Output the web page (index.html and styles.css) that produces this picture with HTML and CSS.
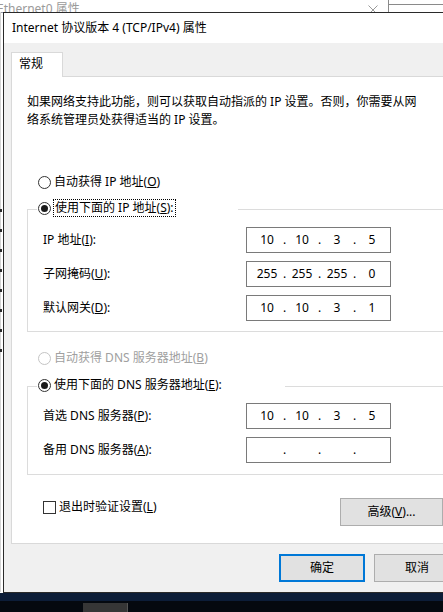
FILE: index.html
```html
<!DOCTYPE html>
<html lang="zh-CN">
<head>
<meta charset="utf-8">
<title>Internet 协议版本 4 (TCP/IPv4) 属性</title>
<link rel="stylesheet" href="styles.css">
</head>
<body>
<div class="screen">
  <div class="bg-window">
    <div class="bg-title">Ethernet0 属性</div>
    <svg class="bg-chrome" width="443" height="14" viewBox="0 0 443 14">
      <path d="M368.5 5.5 L377.5 14.5 M377.5 5.5 L368.5 14.5" stroke="#9a9a9a" stroke-width="1" fill="none"/>
      <path d="M388.5 0 V14 M388.5 4.5 H443" stroke="#8a8a8a" stroke-width="1" fill="none"/>
    </svg>
    <span class="bg-strip"></span>
    <span class="bg-strip-marks"></span>
  </div>
  <div class="taskbar"><span class="task-item"></span></div>

  <div class="dialog">
    <div class="titlebar">Internet 协议版本 4 (TCP/IPv4) 属性</div>
    <div class="body">
      <div class="tabs"><div class="tab">常规</div></div>
      <div class="panel">
        <p class="desc">如果网络支持此功能，则可以获取自动指派的 IP 设置。否则，你需要从网<br>络系统管理员处获得适当的 IP 设置。</p>

        <div class="option option-ip-auto"><span class="radio"></span><span class="opt-label">自动获得 IP 地址(<u>O</u>)</span></div>

        <div class="group group-ip">
          <div class="legend legend-ip"><span class="radio checked"></span><span class="opt-label focus">使用下面的 IP 地址(<u>S</u>):</span></div>
          <div class="field">
            <span class="field-label">IP 地址(<u>I</u>):</span>
            <div class="ipbox"><span class="seg">10</span><span class="dot">.</span><span class="seg">10</span><span class="dot">.</span><span class="seg">3</span><span class="dot">.</span><span class="seg">5</span></div>
          </div>
          <div class="field">
            <span class="field-label">子网掩码(<u>U</u>):</span>
            <div class="ipbox"><span class="seg">255</span><span class="dot">.</span><span class="seg">255</span><span class="dot">.</span><span class="seg">255</span><span class="dot">.</span><span class="seg">0</span></div>
          </div>
          <div class="field">
            <span class="field-label">默认网关(<u>D</u>):</span>
            <div class="ipbox"><span class="seg">10</span><span class="dot">.</span><span class="seg">10</span><span class="dot">.</span><span class="seg">3</span><span class="dot">.</span><span class="seg">1</span></div>
          </div>
        </div>

        <div class="option option-dns-auto disabled"><span class="radio"></span><span class="opt-label">自动获得 DNS 服务器地址(<u>B</u>)</span></div>

        <div class="group group-dns">
          <div class="legend legend-dns"><span class="radio checked"></span><span class="opt-label">使用下面的 DNS 服务器地址(<u>E</u>):</span></div>
          <div class="field">
            <span class="field-label">首选 DNS 服务器(<u>P</u>):</span>
            <div class="ipbox"><span class="seg">10</span><span class="dot">.</span><span class="seg">10</span><span class="dot">.</span><span class="seg">3</span><span class="dot">.</span><span class="seg">5</span></div>
          </div>
          <div class="field">
            <span class="field-label">备用 DNS 服务器(<u>A</u>):</span>
            <div class="ipbox"><span class="seg"></span><span class="dot">.</span><span class="seg"></span><span class="dot">.</span><span class="seg"></span><span class="dot">.</span><span class="seg"></span></div>
          </div>
        </div>

        <div class="footer-row">
          <div class="check-row"><span class="checkbox"></span><span class="opt-label">退出时验证设置(<u>L</u>)</span></div>
          <button class="btn btn-advanced" type="button">高级(<u>V</u>)...</button>
        </div>
      </div>
      <div class="actions">
        <button class="btn btn-dialog btn-default" type="button">确定</button>
        <button class="btn btn-dialog" type="button">取消</button>
      </div>
    </div>
  </div>
</div>
</body>
</html>
```

FILE: styles.css
```css
* { box-sizing: border-box; }

html, body {
  margin: 0;
  padding: 0;
}

body {
  font-family: "Noto Sans", "Noto Sans CJK SC", sans-serif;
  font-size: 12px;
  line-height: 18px;
  color: #000;
  background: #fff;
}

.screen {
  position: relative;
  width: 443px;
  height: 612px;
  overflow: hidden;
  display: flex;
  flex-direction: column;
}

/* background window peeking out */
.bg-window {
  position: relative;
  height: 593px;
  background: #fff;
}

.bg-title {
  position: absolute;
  left: -3px;
  top: 0;
  line-height: 18px;
  color: #9a9a9a;
  white-space: nowrap;
}

.bg-chrome {
  position: absolute;
  left: 0;
  top: 0;
  display: block;
}

.bg-strip {
  position: absolute;
  left: 0;
  top: 12px;
  width: 3px;
  height: 580px;
  border-left: 1px solid #d4d4d4;
}

.bg-strip-marks {
  position: absolute;
  left: 0;
  top: 206px;
  width: 2px;
  height: 160px;
  background: repeating-linear-gradient(to bottom, transparent 0 3px, #2a2a2a 3px 6px, transparent 6px 20px);
}

.taskbar {
  position: relative;
  height: 19px;
  background: linear-gradient(to bottom, #0c1d38 0 8px, #05090f 8px);
}

.task-item {
  position: absolute;
  left: 83px;
  top: 10px;
  width: 45px;
  height: 9px;
  background: #363636;
  border-right: 1px solid #555;
}

/* dialog */
.dialog {
  position: absolute;
  left: 3px;
  top: 12px;
  width: 470px;
  border: 1px solid #2a2a2a;
  background: #f0f0f0;
  display: flex;
  flex-direction: column;
}

.titlebar {
  height: 30px;
  line-height: 30px;
  padding-left: 8px;
  background: #fff;
  white-space: nowrap;
}

.body {
  padding: 9px 7px 10px 7px;
  display: flex;
  flex-direction: column;
}

.tabs {
  display: flex;
  height: 24px;
}

.tab {
  position: relative;
  z-index: 1;
  width: 52px;
  height: 25px;
  padding-left: 7px;
  line-height: 22px;
  background: #fff;
  border: 1px solid #d9d9d9;
  border-bottom: none;
}

.panel {
  background: #fff;
  border: 1px solid #d9d9d9;
  padding: 16px 0 17px 0;
  display: flex;
  flex-direction: column;
}

.desc {
  margin: 0 0 0 15px;
  line-height: 18px;
  white-space: nowrap;
}

.option {
  display: flex;
  align-items: center;
  height: 18px;
  padding-left: 26px;
  gap: 3px;
}

.option-ip-auto { margin-top: 44px; }
.option-dns-auto { margin-top: 17px; }

.opt-label {
  white-space: nowrap;
  line-height: 16px;
}

.disabled .opt-label { color: #a0a0a0; }

.radio {
  flex: none;
  width: 13px;
  height: 13px;
  border: 1px solid #333;
  border-radius: 50%;
  background: #fff;
  display: flex;
  align-items: center;
  justify-content: center;
}

.radio.checked::after {
  content: "";
  width: 7px;
  height: 7px;
  border-radius: 50%;
  background: #1a1a1a;
}

.disabled .radio { border-color: #c4c4c4; }

.group {
  margin-left: 15px;
  border: 1px solid #dcdcdc;
  border-right: none;
  display: flex;
  flex-direction: column;
  gap: 8px;
}

.group-ip { margin-top: 18px; padding-bottom: 10px; }
.group-dns { margin-top: 19px; padding-bottom: 11px; }

.legend {
  display: flex;
  align-items: center;
  gap: 2px;
  height: 18px;
  margin-top: -11px;
  margin-left: 9px;
  padding-left: 1px;
  background: #fff;
}

.legend-ip { width: 201px; margin-bottom: 2px; }
.legend-dns { width: 248px; margin-bottom: 1px; }

.legend-dns .opt-label { padding-left: 1px; }

.focus {
  height: 18px;
  line-height: 16px;
  padding: 0 1px;
  border: 1px dotted #000;
}

.field {
  display: flex;
  align-items: center;
  height: 26px;
  padding-left: 15px;
}

.field-label {
  width: 203px;
  white-space: nowrap;
}

.ipbox {
  width: 145px;
  height: 26px;
  border: 1px solid #7a7a7a;
  padding-left: 5px;
  display: flex;
  align-items: center;
  background: #fff;
}

.seg {
  width: 30px;
  text-align: center;
}

.dot {
  width: 5px;
  text-align: center;
}

.footer-row {
  margin-top: 23px;
  display: flex;
  align-items: flex-start;
  padding-left: 31px;
  padding-right: 21px;
}

.check-row {
  display: flex;
  align-items: center;
  height: 18px;
  gap: 3px;
}

.checkbox {
  width: 13px;
  height: 13px;
  border: 1px solid #333;
  background: #fff;
}

.btn {
  font: inherit;
  color: #000;
  line-height: 16px;
  height: 28px;
  padding: 0;
  background: #e1e1e1;
  border: 1px solid #adadad;
  border-radius: 0;
}

.btn-advanced {
  margin-left: auto;
  width: 103px;
}

.actions {
  margin-top: 10px;
  display: flex;
  gap: 9px;
  padding-left: 268px;
}

.btn-dialog {
  flex: none;
  width: 86px;
}

.btn-default {
  border: 2px solid #0078d7;
}
```
